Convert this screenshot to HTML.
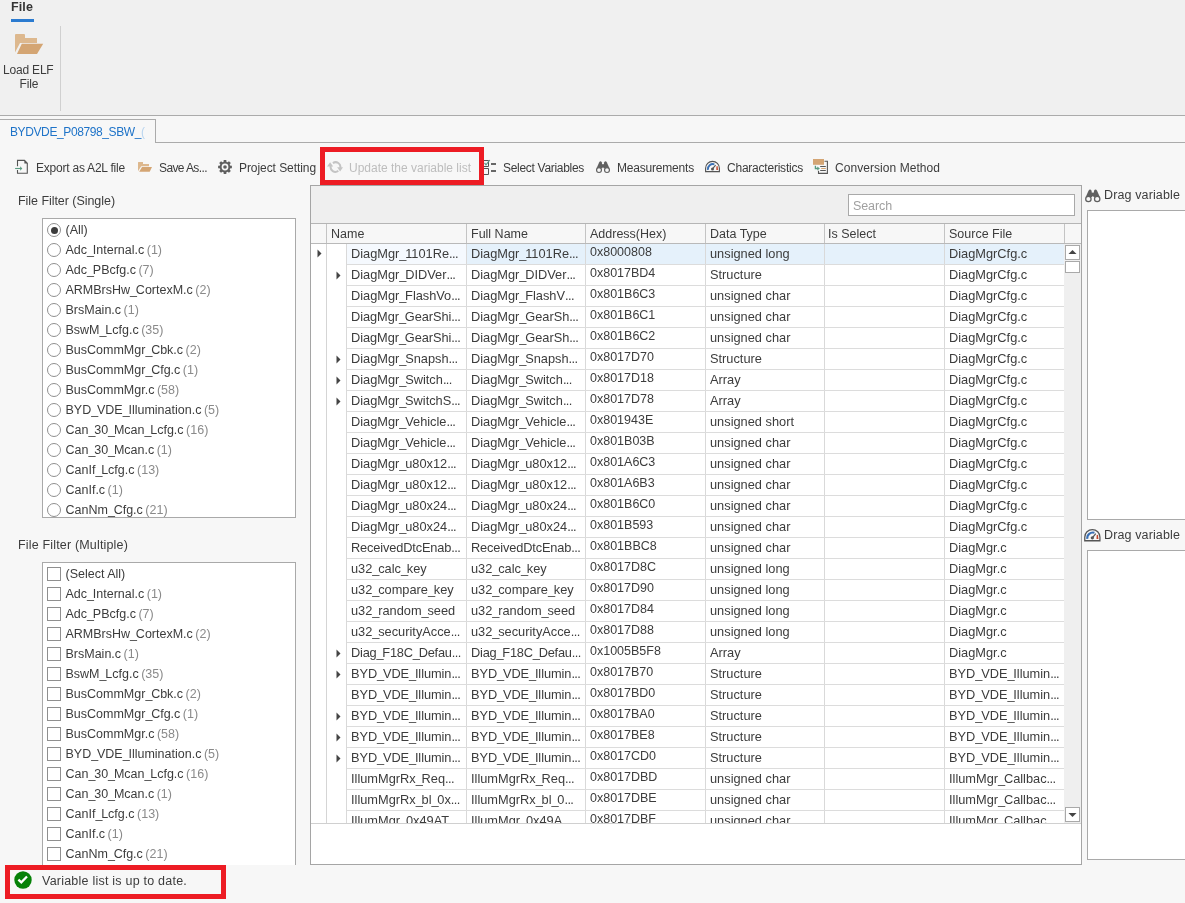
<!DOCTYPE html><html><head><meta charset="utf-8"><style>
*{margin:0;padding:0;box-sizing:border-box}
html,body{width:1185px;height:903px;overflow:hidden;background:#f7f7f7;font-family:"Liberation Sans", sans-serif;color:#3c3c3c;font-size:12.5px}
.a{position:absolute;white-space:nowrap}
.t{position:absolute;white-space:nowrap;line-height:16px}
.rad{position:absolute;width:14px;height:14px;border:1px solid #8f8f8f;border-radius:50%;background:#fff}
.chk{position:absolute;width:14px;height:14px;border:1px solid #8f8f8f;background:#fff}
</style></head><body><div style="position:absolute;left:0;top:0;width:1185px;height:903px;will-change:transform">

<div class="a" style="left:0;top:0;width:1185px;height:115px;background:#f0f0f0"></div>
<div class="a" style="left:0;top:115px;width:1185px;height:1px;background:#ababab"></div>
<div class="t" style="left:11px;top:-1.13px;font-size:12.5px;color:#333;font-weight:bold;letter-spacing:0.117px;">File</div>
<div class="a" style="left:11px;top:19px;width:23px;height:3px;background:#2b7bd0"></div>
<div class="a" style="left:60px;top:26px;width:1px;height:85px;background:#d0d0d0"></div>
<svg class="a" style="left:15px;top:34px" width="29" height="21" viewBox="0 0 29 21">
<path d="M0 1 Q0 0 1 0 H9.5 L10 1 V4 H22 V9 H5 L0 18.6 Z" fill="#ddb88e"/>
<path d="M6.8 9.7 H28.2 L22 20 H2 Z" fill="#d4a573"/></svg>
<div class="t" style="left:3px;top:61.63px;font-size:12px;letter-spacing:-0.192px;">Load ELF</div>
<div class="t" style="left:19.5px;top:75.53px;font-size:12px;letter-spacing:-0.159px;">File</div>
<div class="a" style="left:0;top:142px;width:1185px;height:1px;background:#ababab"></div>
<div class="a" style="left:-1px;top:119px;width:157px;height:24px;border:1px solid #ababab;border-bottom:none;background:#f7f7f7"></div>
<div class="t" style="left:10px;top:124.03px;font-size:12px;color:#1e73c8;letter-spacing:-0.393px;">BYDVDE_P08798_SBW_</div>
<div class="t" style="left:141px;top:123.5px;font-size:12px;color:#b9d5ef;width:4px;overflow:hidden">(</div>
<svg class="a" style="left:14px;top:159px" width="16" height="16" viewBox="0 0 16 16">
<path d="M3.5 7.3 V1.4 H10.5 L13.3 4.3 V14.3 H3.5 V11.1" fill="none" stroke="#555" stroke-width="1.1"/>
<path d="M10.4 1.2 V4.6 H13.6 Z" fill="#555"/>
<path d="M1.1 9.5 H7.2" stroke="#5a9a80" stroke-width="1.1"/>
<path d="M6.2 7.2 L8.3 9.5 L6.2 11.8 Z" fill="#5a9a80"/></svg>
<div class="t" style="left:36px;top:160.03px;font-size:12px;color:#3c3c3c;letter-spacing:-0.225px;">Export as A2L file</div>
<svg class="a" style="left:138px;top:162px" width="15" height="12" viewBox="0 0 15 12">
<path d="M0 0.5 Q0 0 0.5 0 H5 V2 H11 V4.2 H3.2 L0 9.3 Z" fill="#ddb88e"/>
<path d="M4 5 H14 L11.7 9.8 H1.2 Z" fill="#d4a573"/></svg>
<div class="t" style="left:159px;top:160.03px;font-size:12px;color:#3c3c3c;letter-spacing:-0.611px;">Save As<span style="letter-spacing:-0.6px">...</span></div>
<svg class="a" style="left:218px;top:160px" width="14" height="14" viewBox="-7 -7 14 14">
<g fill="#5f5f5f"><circle r="5.3"/>
<path id="tooth" d="M-1.3 -6.9 H1.3 L1.6 -4 H-1.6 Z"/>
<use href="#tooth" transform="rotate(45)"/><use href="#tooth" transform="rotate(90)"/><use href="#tooth" transform="rotate(135)"/>
<use href="#tooth" transform="rotate(180)"/><use href="#tooth" transform="rotate(225)"/><use href="#tooth" transform="rotate(270)"/><use href="#tooth" transform="rotate(315)"/></g>
<circle r="3.4" fill="#f7f7f7"/><circle r="1.8" fill="#5f5f5f"/></svg>
<div class="t" style="left:239px;top:160.03px;font-size:12px;color:#3c3c3c;letter-spacing:-0.069px;">Project Setting</div>
<svg class="a" style="left:326px;top:160px" width="18" height="14" viewBox="0 0 18 14">
<path d="M12.3 10.8 A4.7 4.7 0 0 1 4.8 5.9" fill="none" stroke="#c4c4c4" stroke-width="2"/>
<path d="M1 6.6 H7.2 L4.1 2.2 Z" fill="#c4c4c4"/>
<path d="M6.9 3.1 A4.7 4.7 0 0 1 14.2 8.1" fill="none" stroke="#c4c4c4" stroke-width="2"/>
<path d="M11.2 7.2 H17 L14.1 11.6 Z" fill="#c4c4c4"/></svg>
<div class="t" style="left:349px;top:160.03px;font-size:12px;color:#bdbdbd;letter-spacing:-0.003px;">Update the variable list</div>
<svg class="a" style="left:482px;top:159px" width="15" height="17" viewBox="0 0 15 17">
<path d="M1.5 1.5 H6.5 V7.5 H1.5 Z M1.5 9.5 H6.5 V15.5 H1.5 Z" fill="none" stroke="#555"/>
<path d="M2.5 4 L4 5.8 L7.8 1" fill="none" stroke="#5a9a88" stroke-width="1.2"/>
<rect x="9" y="4.2" width="5" height="1.6" fill="#444"/><rect x="9" y="11.2" width="5" height="1.6" fill="#444"/></svg>
<div class="t" style="left:503px;top:160.03px;font-size:12px;color:#3c3c3c;letter-spacing:-0.301px;">Select Variables</div>
<svg class="a" style="left:595px;top:160px" width="16" height="14" viewBox="0 0 16 14">
<g fill="#606060"><path d="M4.1 2.6 Q5.5 0.1 6.9 2.6 L7.4 8.2 H1.6 Z"/><path d="M9.1 2.6 Q10.5 0.1 11.9 2.6 L14.4 8.2 H8.6 Z"/>
<rect x="6.5" y="4.2" width="3" height="3.4"/></g>
<circle cx="4" cy="10" r="2.45" fill="#f7f7f7" stroke="#606060" stroke-width="1.15"/><circle cx="12" cy="10" r="2.45" fill="#f7f7f7" stroke="#606060" stroke-width="1.15"/></svg>
<div class="t" style="left:617px;top:160.03px;font-size:12px;color:#3c3c3c;letter-spacing:-0.197px;">Measurements</div>
<svg class="a" style="left:704px;top:160px" width="17" height="13" viewBox="0 0 17 13">
<path d="M1.6 11.6 V8.3 A6.9 6.9 0 0 1 15.4 8.3 V11.6 Z" fill="none" stroke="#555" stroke-width="1.15"/>
<path d="M3.9 9.8 A5.1 5.1 0 0 1 10.4 4.3" fill="none" stroke="#3a70b5" stroke-width="1.9"/>
<path d="M12.4 6.6 L13.6 6.1 L14 10 H12.3 Z" fill="#c9462c"/>
<path d="M8.5 8.9 L11.6 5.2" stroke="#555" stroke-width="1.1"/><circle cx="8.5" cy="8.9" r="1.5" fill="#555"/></svg>
<div class="t" style="left:727px;top:160.03px;font-size:12px;color:#3c3c3c;letter-spacing:-0.224px;">Characteristics</div>
<svg class="a" style="left:812px;top:158px" width="17" height="17" viewBox="0 0 17 17">
<rect x="1" y="1" width="11" height="5.8" fill="#d4a574"/>
<path d="M12.5 3.3 H15.4 V15.4 H6.5 V12.8" fill="none" stroke="#555" stroke-width="1.1"/>
<path d="M8.2 8.5 H13.8 M8.2 12.5 H13.8" stroke="#555" stroke-width="1"/>
<path d="M9.2 10.5 H13.8" stroke="#d4a574" stroke-width="1"/>
<path d="M3.4 7.8 V10.5 H6" fill="none" stroke="#5a9a80" stroke-width="1.3"/>
<path d="M5.3 8.6 L7.9 10.5 L5.3 12.4 Z" fill="#5a9a80"/></svg>
<div class="t" style="left:835px;top:160.03px;font-size:12px;color:#3c3c3c;letter-spacing:0.055px;">Conversion Method</div>
<div class="a" style="left:320px;top:147px;width:164px;height:38px;border:5px solid #ed1c24"></div>
<div class="t" style="left:18px;top:192.87px;font-size:12.5px;letter-spacing:-0.047px;">File Filter (Single)</div>
<div class="a" style="left:42px;top:218px;width:254px;height:300px;border:1px solid #a9a9a9;background:#fff;overflow:hidden">
<div class="rad" style="left:4px;top:4px"></div>
<div class="a" style="left:7.5px;top:7.5px;width:7px;height:7px;border-radius:50%;background:#3c3c3c"></div>
<div class="rad" style="left:4px;top:24px"></div>
<div class="rad" style="left:4px;top:44px"></div>
<div class="rad" style="left:4px;top:64px"></div>
<div class="rad" style="left:4px;top:84px"></div>
<div class="rad" style="left:4px;top:104px"></div>
<div class="rad" style="left:4px;top:124px"></div>
<div class="rad" style="left:4px;top:144px"></div>
<div class="rad" style="left:4px;top:164px"></div>
<div class="rad" style="left:4px;top:184px"></div>
<div class="rad" style="left:4px;top:204px"></div>
<div class="rad" style="left:4px;top:224px"></div>
<div class="rad" style="left:4px;top:244px"></div>
<div class="rad" style="left:4px;top:264px"></div>
<div class="rad" style="left:4px;top:284px"></div>
</div>
<div class="a" style="left:43px;top:219px;width:252px;height:298px;overflow:hidden">
<div class="t" style="left:22.5px;top:2.87px;font-size:12.5px;">(All)</div>
<div class="t" style="left:22.5px;top:22.87px;font-size:12.5px;">Adc<span style="letter-spacing:-1.2px">_</span>Internal.c<span style="color:#8a8a8a;margin-left:2.5px">(1)</span></div>
<div class="t" style="left:22.5px;top:42.87px;font-size:12.5px;">Adc<span style="letter-spacing:-1.2px">_</span>PBcfg.c<span style="color:#8a8a8a;margin-left:2.5px">(7)</span></div>
<div class="t" style="left:22.5px;top:62.87px;font-size:12.5px;">ARMBrsHw<span style="letter-spacing:-1.2px">_</span>CortexM.c<span style="color:#8a8a8a;margin-left:2.5px">(2)</span></div>
<div class="t" style="left:22.5px;top:82.87px;font-size:12.5px;">BrsMain.c<span style="color:#8a8a8a;margin-left:2.5px">(1)</span></div>
<div class="t" style="left:22.5px;top:102.87px;font-size:12.5px;">BswM<span style="letter-spacing:-1.2px">_</span>Lcfg.c<span style="color:#8a8a8a;margin-left:2.5px">(35)</span></div>
<div class="t" style="left:22.5px;top:122.87px;font-size:12.5px;">BusCommMgr<span style="letter-spacing:-1.2px">_</span>Cbk.c<span style="color:#8a8a8a;margin-left:2.5px">(2)</span></div>
<div class="t" style="left:22.5px;top:142.87px;font-size:12.5px;">BusCommMgr<span style="letter-spacing:-1.2px">_</span>Cfg.c<span style="color:#8a8a8a;margin-left:2.5px">(1)</span></div>
<div class="t" style="left:22.5px;top:162.87px;font-size:12.5px;">BusCommMgr.c<span style="color:#8a8a8a;margin-left:2.5px">(58)</span></div>
<div class="t" style="left:22.5px;top:182.87px;font-size:12.5px;">BYD<span style="letter-spacing:-1.2px">_</span>VDE<span style="letter-spacing:-1.2px">_</span>Illumination.c<span style="color:#8a8a8a;margin-left:2.5px">(5)</span></div>
<div class="t" style="left:22.5px;top:202.87px;font-size:12.5px;">Can<span style="letter-spacing:-1.2px">_</span>30<span style="letter-spacing:-1.2px">_</span>Mcan<span style="letter-spacing:-1.2px">_</span>Lcfg.c<span style="color:#8a8a8a;margin-left:2.5px">(16)</span></div>
<div class="t" style="left:22.5px;top:222.87px;font-size:12.5px;">Can<span style="letter-spacing:-1.2px">_</span>30<span style="letter-spacing:-1.2px">_</span>Mcan.c<span style="color:#8a8a8a;margin-left:2.5px">(1)</span></div>
<div class="t" style="left:22.5px;top:242.87px;font-size:12.5px;">CanIf<span style="letter-spacing:-1.2px">_</span>Lcfg.c<span style="color:#8a8a8a;margin-left:2.5px">(13)</span></div>
<div class="t" style="left:22.5px;top:262.87px;font-size:12.5px;">CanIf.c<span style="color:#8a8a8a;margin-left:2.5px">(1)</span></div>
<div class="t" style="left:22.5px;top:282.87px;font-size:12.5px;">CanNm<span style="letter-spacing:-1.2px">_</span>Cfg.c<span style="color:#8a8a8a;margin-left:2.5px">(21)</span></div>
</div>
<div class="t" style="left:18px;top:536.87px;font-size:12.5px;letter-spacing:0.170px;">File Filter (Multiple)</div>
<div class="a" style="left:42px;top:562px;width:254px;height:310px;border:1px solid #a9a9a9;background:#fff;overflow:hidden"></div>
<div class="a" style="left:43px;top:563px;width:252px;height:308px;overflow:hidden">
<div class="chk" style="left:4px;top:4px"></div>
<div class="t" style="left:22.5px;top:2.87px;font-size:12.5px;">(Select All)</div>
<div class="chk" style="left:4px;top:24px"></div>
<div class="t" style="left:22.5px;top:22.87px;font-size:12.5px;">Adc<span style="letter-spacing:-1.2px">_</span>Internal.c<span style="color:#8a8a8a;margin-left:2.5px">(1)</span></div>
<div class="chk" style="left:4px;top:44px"></div>
<div class="t" style="left:22.5px;top:42.87px;font-size:12.5px;">Adc<span style="letter-spacing:-1.2px">_</span>PBcfg.c<span style="color:#8a8a8a;margin-left:2.5px">(7)</span></div>
<div class="chk" style="left:4px;top:64px"></div>
<div class="t" style="left:22.5px;top:62.87px;font-size:12.5px;">ARMBrsHw<span style="letter-spacing:-1.2px">_</span>CortexM.c<span style="color:#8a8a8a;margin-left:2.5px">(2)</span></div>
<div class="chk" style="left:4px;top:84px"></div>
<div class="t" style="left:22.5px;top:82.87px;font-size:12.5px;">BrsMain.c<span style="color:#8a8a8a;margin-left:2.5px">(1)</span></div>
<div class="chk" style="left:4px;top:104px"></div>
<div class="t" style="left:22.5px;top:102.87px;font-size:12.5px;">BswM<span style="letter-spacing:-1.2px">_</span>Lcfg.c<span style="color:#8a8a8a;margin-left:2.5px">(35)</span></div>
<div class="chk" style="left:4px;top:124px"></div>
<div class="t" style="left:22.5px;top:122.87px;font-size:12.5px;">BusCommMgr<span style="letter-spacing:-1.2px">_</span>Cbk.c<span style="color:#8a8a8a;margin-left:2.5px">(2)</span></div>
<div class="chk" style="left:4px;top:144px"></div>
<div class="t" style="left:22.5px;top:142.87px;font-size:12.5px;">BusCommMgr<span style="letter-spacing:-1.2px">_</span>Cfg.c<span style="color:#8a8a8a;margin-left:2.5px">(1)</span></div>
<div class="chk" style="left:4px;top:164px"></div>
<div class="t" style="left:22.5px;top:162.87px;font-size:12.5px;">BusCommMgr.c<span style="color:#8a8a8a;margin-left:2.5px">(58)</span></div>
<div class="chk" style="left:4px;top:184px"></div>
<div class="t" style="left:22.5px;top:182.87px;font-size:12.5px;">BYD<span style="letter-spacing:-1.2px">_</span>VDE<span style="letter-spacing:-1.2px">_</span>Illumination.c<span style="color:#8a8a8a;margin-left:2.5px">(5)</span></div>
<div class="chk" style="left:4px;top:204px"></div>
<div class="t" style="left:22.5px;top:202.87px;font-size:12.5px;">Can<span style="letter-spacing:-1.2px">_</span>30<span style="letter-spacing:-1.2px">_</span>Mcan<span style="letter-spacing:-1.2px">_</span>Lcfg.c<span style="color:#8a8a8a;margin-left:2.5px">(16)</span></div>
<div class="chk" style="left:4px;top:224px"></div>
<div class="t" style="left:22.5px;top:222.87px;font-size:12.5px;">Can<span style="letter-spacing:-1.2px">_</span>30<span style="letter-spacing:-1.2px">_</span>Mcan.c<span style="color:#8a8a8a;margin-left:2.5px">(1)</span></div>
<div class="chk" style="left:4px;top:244px"></div>
<div class="t" style="left:22.5px;top:242.87px;font-size:12.5px;">CanIf<span style="letter-spacing:-1.2px">_</span>Lcfg.c<span style="color:#8a8a8a;margin-left:2.5px">(13)</span></div>
<div class="chk" style="left:4px;top:264px"></div>
<div class="t" style="left:22.5px;top:262.87px;font-size:12.5px;">CanIf.c<span style="color:#8a8a8a;margin-left:2.5px">(1)</span></div>
<div class="chk" style="left:4px;top:284px"></div>
<div class="t" style="left:22.5px;top:282.87px;font-size:12.5px;">CanNm<span style="letter-spacing:-1.2px">_</span>Cfg.c<span style="color:#8a8a8a;margin-left:2.5px">(21)</span></div>
</div>
<div class="a" style="left:0px;top:865px;width:305px;height:38px;background:#f7f7f7"></div>
<div class="a" style="left:5px;top:865px;width:221px;height:34px;border:5px solid #ed1c24;background:#f7f7f7"></div>
<svg class="a" style="left:14px;top:871px" width="18" height="18" viewBox="0 0 18 18">
<circle cx="9" cy="9" r="8.7" fill="#068208"/>
<path d="M4.4 8.6 L7.3 11.3 L13 5.5" fill="none" stroke="#fff" stroke-width="2.3"/></svg>
<div class="t" style="left:42px;top:873.37px;font-size:12.5px;letter-spacing:0.224px;">Variable list is up to date.</div>
<div class="a" style="left:310px;top:185px;width:772px;height:680px;border:1px solid #a5a5a5;background:#fff"></div>
<div class="a" style="left:311px;top:186px;width:770px;height:37px;background:#efefef"></div>
<div class="a" style="left:311px;top:223px;width:770px;height:1px;background:#b5b5b5"></div>
<div class="a" style="left:848px;top:194px;width:227px;height:22px;border:1px solid #a9a9a9;background:#fff"></div>
<div class="t" style="left:853px;top:197.87px;font-size:12.5px;color:#a0a0a0;letter-spacing:-0.101px;">Search</div>
<div class="a" style="left:311px;top:224px;width:770px;height:19px;background:#f7f7f7"></div>
<div class="a" style="left:311px;top:243px;width:770px;height:1px;background:#b9b9b9"></div>
<div class="a" style="left:326px;top:224px;width:1px;height:19px;background:#c4c4c4"></div>
<div class="a" style="left:466px;top:224px;width:1px;height:19px;background:#c4c4c4"></div>
<div class="a" style="left:585px;top:224px;width:1px;height:19px;background:#c4c4c4"></div>
<div class="a" style="left:705px;top:224px;width:1px;height:19px;background:#c4c4c4"></div>
<div class="a" style="left:824px;top:224px;width:1px;height:19px;background:#c4c4c4"></div>
<div class="a" style="left:944px;top:224px;width:1px;height:19px;background:#c4c4c4"></div>
<div class="a" style="left:1064px;top:224px;width:1px;height:19px;background:#c4c4c4"></div>
<div class="t" style="left:331px;top:225.87px;font-size:12.5px;">Name</div>
<div class="t" style="left:471px;top:225.87px;font-size:12.5px;">Full Name</div>
<div class="t" style="left:590px;top:225.87px;font-size:12.5px;">Address(Hex)</div>
<div class="t" style="left:710px;top:225.87px;font-size:12.5px;">Data Type</div>
<div class="t" style="left:828px;top:225.87px;font-size:12.5px;">Is Select</div>
<div class="t" style="left:949px;top:225.87px;font-size:12.5px;">Source File</div>
<div class="a" style="left:347px;top:244px;width:119px;height:20px;background:#f5f9fe"></div>
<div class="a" style="left:467px;top:244px;width:597px;height:20px;background:#e5f1fb"></div>
<div class="a" style="left:326px;top:244px;width:1px;height:579px;background:#d5d5d5"></div>
<div class="a" style="left:346px;top:244px;width:1px;height:579px;background:#d9d9d9"></div>
<div class="a" style="left:466px;top:244px;width:1px;height:579px;background:#d9d9d9"></div>
<div class="a" style="left:585px;top:244px;width:1px;height:579px;background:#d9d9d9"></div>
<div class="a" style="left:705px;top:244px;width:1px;height:579px;background:#d9d9d9"></div>
<div class="a" style="left:824px;top:244px;width:1px;height:579px;background:#d9d9d9"></div>
<div class="a" style="left:944px;top:244px;width:1px;height:579px;background:#d9d9d9"></div>
<div class="a" style="left:347px;top:264px;width:717px;height:1px;background:#dcdcdc"></div>
<div class="a" style="left:347px;top:285px;width:717px;height:1px;background:#dcdcdc"></div>
<div class="a" style="left:347px;top:306px;width:717px;height:1px;background:#dcdcdc"></div>
<div class="a" style="left:347px;top:327px;width:717px;height:1px;background:#dcdcdc"></div>
<div class="a" style="left:347px;top:348px;width:717px;height:1px;background:#dcdcdc"></div>
<div class="a" style="left:347px;top:369px;width:717px;height:1px;background:#dcdcdc"></div>
<div class="a" style="left:347px;top:390px;width:717px;height:1px;background:#dcdcdc"></div>
<div class="a" style="left:347px;top:411px;width:717px;height:1px;background:#dcdcdc"></div>
<div class="a" style="left:347px;top:432px;width:717px;height:1px;background:#dcdcdc"></div>
<div class="a" style="left:347px;top:453px;width:717px;height:1px;background:#dcdcdc"></div>
<div class="a" style="left:347px;top:474px;width:717px;height:1px;background:#dcdcdc"></div>
<div class="a" style="left:347px;top:495px;width:717px;height:1px;background:#dcdcdc"></div>
<div class="a" style="left:347px;top:516px;width:717px;height:1px;background:#dcdcdc"></div>
<div class="a" style="left:347px;top:537px;width:717px;height:1px;background:#dcdcdc"></div>
<div class="a" style="left:347px;top:558px;width:717px;height:1px;background:#dcdcdc"></div>
<div class="a" style="left:347px;top:579px;width:717px;height:1px;background:#dcdcdc"></div>
<div class="a" style="left:347px;top:600px;width:717px;height:1px;background:#dcdcdc"></div>
<div class="a" style="left:347px;top:621px;width:717px;height:1px;background:#dcdcdc"></div>
<div class="a" style="left:347px;top:642px;width:717px;height:1px;background:#dcdcdc"></div>
<div class="a" style="left:347px;top:663px;width:717px;height:1px;background:#dcdcdc"></div>
<div class="a" style="left:347px;top:684px;width:717px;height:1px;background:#dcdcdc"></div>
<div class="a" style="left:347px;top:705px;width:717px;height:1px;background:#dcdcdc"></div>
<div class="a" style="left:347px;top:726px;width:717px;height:1px;background:#dcdcdc"></div>
<div class="a" style="left:347px;top:747px;width:717px;height:1px;background:#dcdcdc"></div>
<div class="a" style="left:347px;top:768px;width:717px;height:1px;background:#dcdcdc"></div>
<div class="a" style="left:347px;top:789px;width:717px;height:1px;background:#dcdcdc"></div>
<div class="a" style="left:347px;top:810px;width:717px;height:1px;background:#dcdcdc"></div>
<div class="a" style="left:311px;top:823px;width:770px;height:1px;background:#d0d0d0"></div>
<div class="a" style="left:311px;top:244px;width:753px;height:579px;overflow:hidden">
<div class="t" style="left:40px;top:1.77px;font-size:12.8px;">DiagMgr<span style="letter-spacing:-1.3px">_</span>1101Re<span style="letter-spacing:-0.6px">...</span></div>
<div class="t" style="left:160px;top:1.77px;font-size:12.8px;">DiagMgr<span style="letter-spacing:-1.3px">_</span>1101Re<span style="letter-spacing:-0.6px">...</span></div>
<div class="t" style="left:279px;top:0.37px;font-size:12.5px;">0x8000808</div>
<div class="t" style="left:399px;top:1.77px;font-size:12.8px;">unsigned long</div>
<div class="t" style="left:638px;top:1.77px;font-size:12.8px;">DiagMgrCfg.c</div>
<div class="t" style="left:40px;top:22.77px;font-size:12.8px;">DiagMgr<span style="letter-spacing:-1.3px">_</span>DIDVer<span style="letter-spacing:-0.6px">...</span></div>
<div class="t" style="left:160px;top:22.77px;font-size:12.8px;">DiagMgr<span style="letter-spacing:-1.3px">_</span>DIDVer<span style="letter-spacing:-0.6px">...</span></div>
<div class="t" style="left:279px;top:21.37px;font-size:12.5px;">0x8017BD4</div>
<div class="t" style="left:399px;top:22.77px;font-size:12.8px;">Structure</div>
<div class="t" style="left:638px;top:22.77px;font-size:12.8px;">DiagMgrCfg.c</div>
<svg class="a" style="left:25px;top:27px" width="5" height="9" viewBox="0 0 5 9"><path d="M0.5 0.5 L4.5 4.5 L0.5 8.5 Z" fill="#444"/></svg>
<div class="t" style="left:40px;top:43.77px;font-size:12.8px;letter-spacing:-0.017px;">DiagMgr<span style="letter-spacing:-1.3px">_</span>FlashVo<span style="letter-spacing:-0.6px">...</span></div>
<div class="t" style="left:160px;top:43.77px;font-size:12.8px;">DiagMgr<span style="letter-spacing:-1.3px">_</span>FlashV<span style="letter-spacing:-0.6px">...</span></div>
<div class="t" style="left:279px;top:42.37px;font-size:12.5px;">0x801B6C3</div>
<div class="t" style="left:399px;top:43.77px;font-size:12.8px;">unsigned char</div>
<div class="t" style="left:638px;top:43.77px;font-size:12.8px;">DiagMgrCfg.c</div>
<div class="t" style="left:40px;top:64.77px;font-size:12.8px;letter-spacing:-0.062px;">DiagMgr<span style="letter-spacing:-1.3px">_</span>GearShi<span style="letter-spacing:-0.6px">...</span></div>
<div class="t" style="left:160px;top:64.77px;font-size:12.8px;">DiagMgr<span style="letter-spacing:-1.3px">_</span>GearSh<span style="letter-spacing:-0.6px">...</span></div>
<div class="t" style="left:279px;top:63.37px;font-size:12.5px;">0x801B6C1</div>
<div class="t" style="left:399px;top:64.77px;font-size:12.8px;">unsigned char</div>
<div class="t" style="left:638px;top:64.77px;font-size:12.8px;">DiagMgrCfg.c</div>
<div class="t" style="left:40px;top:85.77px;font-size:12.8px;letter-spacing:-0.062px;">DiagMgr<span style="letter-spacing:-1.3px">_</span>GearShi<span style="letter-spacing:-0.6px">...</span></div>
<div class="t" style="left:160px;top:85.77px;font-size:12.8px;">DiagMgr<span style="letter-spacing:-1.3px">_</span>GearSh<span style="letter-spacing:-0.6px">...</span></div>
<div class="t" style="left:279px;top:84.37px;font-size:12.5px;">0x801B6C2</div>
<div class="t" style="left:399px;top:85.77px;font-size:12.8px;">unsigned char</div>
<div class="t" style="left:638px;top:85.77px;font-size:12.8px;">DiagMgrCfg.c</div>
<div class="t" style="left:40px;top:106.77px;font-size:12.8px;">DiagMgr<span style="letter-spacing:-1.3px">_</span>Snapsh<span style="letter-spacing:-0.6px">...</span></div>
<div class="t" style="left:160px;top:106.77px;font-size:12.8px;">DiagMgr<span style="letter-spacing:-1.3px">_</span>Snapsh<span style="letter-spacing:-0.6px">...</span></div>
<div class="t" style="left:279px;top:105.37px;font-size:12.5px;">0x8017D70</div>
<div class="t" style="left:399px;top:106.77px;font-size:12.8px;">Structure</div>
<div class="t" style="left:638px;top:106.77px;font-size:12.8px;">DiagMgrCfg.c</div>
<svg class="a" style="left:25px;top:111px" width="5" height="9" viewBox="0 0 5 9"><path d="M0.5 0.5 L4.5 4.5 L0.5 8.5 Z" fill="#444"/></svg>
<div class="t" style="left:40px;top:127.77px;font-size:12.8px;">DiagMgr<span style="letter-spacing:-1.3px">_</span>Switch<span style="letter-spacing:-0.6px">...</span></div>
<div class="t" style="left:160px;top:127.77px;font-size:12.8px;">DiagMgr<span style="letter-spacing:-1.3px">_</span>Switch<span style="letter-spacing:-0.6px">...</span></div>
<div class="t" style="left:279px;top:126.37px;font-size:12.5px;">0x8017D18</div>
<div class="t" style="left:399px;top:127.77px;font-size:12.8px;">Array</div>
<div class="t" style="left:638px;top:127.77px;font-size:12.8px;">DiagMgrCfg.c</div>
<svg class="a" style="left:25px;top:132px" width="5" height="9" viewBox="0 0 5 9"><path d="M0.5 0.5 L4.5 4.5 L0.5 8.5 Z" fill="#444"/></svg>
<div class="t" style="left:40px;top:148.77px;font-size:12.8px;letter-spacing:-0.017px;">DiagMgr<span style="letter-spacing:-1.3px">_</span>SwitchS<span style="letter-spacing:-0.6px">...</span></div>
<div class="t" style="left:160px;top:148.77px;font-size:12.8px;">DiagMgr<span style="letter-spacing:-1.3px">_</span>Switch<span style="letter-spacing:-0.6px">...</span></div>
<div class="t" style="left:279px;top:147.37px;font-size:12.5px;">0x8017D78</div>
<div class="t" style="left:399px;top:148.77px;font-size:12.8px;">Array</div>
<div class="t" style="left:638px;top:148.77px;font-size:12.8px;">DiagMgrCfg.c</div>
<svg class="a" style="left:25px;top:153px" width="5" height="9" viewBox="0 0 5 9"><path d="M0.5 0.5 L4.5 4.5 L0.5 8.5 Z" fill="#444"/></svg>
<div class="t" style="left:40px;top:169.77px;font-size:12.8px;">DiagMgr<span style="letter-spacing:-1.3px">_</span>Vehicle<span style="letter-spacing:-0.6px">...</span></div>
<div class="t" style="left:160px;top:169.77px;font-size:12.8px;">DiagMgr<span style="letter-spacing:-1.3px">_</span>Vehicle<span style="letter-spacing:-0.6px">...</span></div>
<div class="t" style="left:279px;top:168.37px;font-size:12.5px;">0x801943E</div>
<div class="t" style="left:399px;top:169.77px;font-size:12.8px;">unsigned short</div>
<div class="t" style="left:638px;top:169.77px;font-size:12.8px;">DiagMgrCfg.c</div>
<div class="t" style="left:40px;top:190.77px;font-size:12.8px;">DiagMgr<span style="letter-spacing:-1.3px">_</span>Vehicle<span style="letter-spacing:-0.6px">...</span></div>
<div class="t" style="left:160px;top:190.77px;font-size:12.8px;">DiagMgr<span style="letter-spacing:-1.3px">_</span>Vehicle<span style="letter-spacing:-0.6px">...</span></div>
<div class="t" style="left:279px;top:189.37px;font-size:12.5px;">0x801B03B</div>
<div class="t" style="left:399px;top:190.77px;font-size:12.8px;">unsigned char</div>
<div class="t" style="left:638px;top:190.77px;font-size:12.8px;">DiagMgrCfg.c</div>
<div class="t" style="left:40px;top:211.77px;font-size:12.8px;">DiagMgr<span style="letter-spacing:-1.3px">_</span>u80x12<span style="letter-spacing:-0.6px">...</span></div>
<div class="t" style="left:160px;top:211.77px;font-size:12.8px;">DiagMgr<span style="letter-spacing:-1.3px">_</span>u80x12<span style="letter-spacing:-0.6px">...</span></div>
<div class="t" style="left:279px;top:210.37px;font-size:12.5px;">0x801A6C3</div>
<div class="t" style="left:399px;top:211.77px;font-size:12.8px;">unsigned char</div>
<div class="t" style="left:638px;top:211.77px;font-size:12.8px;">DiagMgrCfg.c</div>
<div class="t" style="left:40px;top:232.77px;font-size:12.8px;">DiagMgr<span style="letter-spacing:-1.3px">_</span>u80x12<span style="letter-spacing:-0.6px">...</span></div>
<div class="t" style="left:160px;top:232.77px;font-size:12.8px;">DiagMgr<span style="letter-spacing:-1.3px">_</span>u80x12<span style="letter-spacing:-0.6px">...</span></div>
<div class="t" style="left:279px;top:231.37px;font-size:12.5px;">0x801A6B3</div>
<div class="t" style="left:399px;top:232.77px;font-size:12.8px;">unsigned char</div>
<div class="t" style="left:638px;top:232.77px;font-size:12.8px;">DiagMgrCfg.c</div>
<div class="t" style="left:40px;top:253.77px;font-size:12.8px;">DiagMgr<span style="letter-spacing:-1.3px">_</span>u80x24<span style="letter-spacing:-0.6px">...</span></div>
<div class="t" style="left:160px;top:253.77px;font-size:12.8px;">DiagMgr<span style="letter-spacing:-1.3px">_</span>u80x24<span style="letter-spacing:-0.6px">...</span></div>
<div class="t" style="left:279px;top:252.37px;font-size:12.5px;">0x801B6C0</div>
<div class="t" style="left:399px;top:253.77px;font-size:12.8px;">unsigned char</div>
<div class="t" style="left:638px;top:253.77px;font-size:12.8px;">DiagMgrCfg.c</div>
<div class="t" style="left:40px;top:274.77px;font-size:12.8px;">DiagMgr<span style="letter-spacing:-1.3px">_</span>u80x24<span style="letter-spacing:-0.6px">...</span></div>
<div class="t" style="left:160px;top:274.77px;font-size:12.8px;">DiagMgr<span style="letter-spacing:-1.3px">_</span>u80x24<span style="letter-spacing:-0.6px">...</span></div>
<div class="t" style="left:279px;top:273.37px;font-size:12.5px;">0x801B593</div>
<div class="t" style="left:399px;top:274.77px;font-size:12.8px;">unsigned char</div>
<div class="t" style="left:638px;top:274.77px;font-size:12.8px;">DiagMgrCfg.c</div>
<div class="t" style="left:40px;top:295.77px;font-size:12.8px;letter-spacing:-0.144px;">ReceivedDtcEnab<span style="letter-spacing:-0.6px">...</span></div>
<div class="t" style="left:160px;top:295.77px;font-size:12.8px;letter-spacing:-0.144px;">ReceivedDtcEnab<span style="letter-spacing:-0.6px">...</span></div>
<div class="t" style="left:279px;top:294.37px;font-size:12.5px;">0x801BBC8</div>
<div class="t" style="left:399px;top:295.77px;font-size:12.8px;">unsigned char</div>
<div class="t" style="left:638px;top:295.77px;font-size:12.8px;">DiagMgr.c</div>
<div class="t" style="left:40px;top:316.77px;font-size:12.8px;">u32<span style="letter-spacing:-1.3px">_</span>calc<span style="letter-spacing:-1.3px">_</span>key</div>
<div class="t" style="left:160px;top:316.77px;font-size:12.8px;">u32<span style="letter-spacing:-1.3px">_</span>calc<span style="letter-spacing:-1.3px">_</span>key</div>
<div class="t" style="left:279px;top:315.37px;font-size:12.5px;">0x8017D8C</div>
<div class="t" style="left:399px;top:316.77px;font-size:12.8px;">unsigned long</div>
<div class="t" style="left:638px;top:316.77px;font-size:12.8px;">DiagMgr.c</div>
<div class="t" style="left:40px;top:337.77px;font-size:12.8px;">u32<span style="letter-spacing:-1.3px">_</span>compare<span style="letter-spacing:-1.3px">_</span>key</div>
<div class="t" style="left:160px;top:337.77px;font-size:12.8px;">u32<span style="letter-spacing:-1.3px">_</span>compare<span style="letter-spacing:-1.3px">_</span>key</div>
<div class="t" style="left:279px;top:336.37px;font-size:12.5px;">0x8017D90</div>
<div class="t" style="left:399px;top:337.77px;font-size:12.8px;">unsigned long</div>
<div class="t" style="left:638px;top:337.77px;font-size:12.8px;">DiagMgr.c</div>
<div class="t" style="left:40px;top:358.77px;font-size:12.8px;">u32<span style="letter-spacing:-1.3px">_</span>random<span style="letter-spacing:-1.3px">_</span>seed</div>
<div class="t" style="left:160px;top:358.77px;font-size:12.8px;">u32<span style="letter-spacing:-1.3px">_</span>random<span style="letter-spacing:-1.3px">_</span>seed</div>
<div class="t" style="left:279px;top:357.37px;font-size:12.5px;">0x8017D84</div>
<div class="t" style="left:399px;top:358.77px;font-size:12.8px;">unsigned long</div>
<div class="t" style="left:638px;top:358.77px;font-size:12.8px;">DiagMgr.c</div>
<div class="t" style="left:40px;top:379.77px;font-size:12.8px;">u32<span style="letter-spacing:-1.3px">_</span>securityAcce<span style="letter-spacing:-0.6px">...</span></div>
<div class="t" style="left:160px;top:379.77px;font-size:12.8px;">u32<span style="letter-spacing:-1.3px">_</span>securityAcce<span style="letter-spacing:-0.6px">...</span></div>
<div class="t" style="left:279px;top:378.37px;font-size:12.5px;">0x8017D88</div>
<div class="t" style="left:399px;top:379.77px;font-size:12.8px;">unsigned long</div>
<div class="t" style="left:638px;top:379.77px;font-size:12.8px;">DiagMgr.c</div>
<div class="t" style="left:40px;top:400.77px;font-size:12.8px;letter-spacing:-0.204px;">Diag<span style="letter-spacing:-1.3px">_</span>F18C<span style="letter-spacing:-1.3px">_</span>Defau<span style="letter-spacing:-0.6px">...</span></div>
<div class="t" style="left:160px;top:400.77px;font-size:12.8px;letter-spacing:-0.204px;">Diag<span style="letter-spacing:-1.3px">_</span>F18C<span style="letter-spacing:-1.3px">_</span>Defau<span style="letter-spacing:-0.6px">...</span></div>
<div class="t" style="left:279px;top:399.37px;font-size:12.5px;">0x1005B5F8</div>
<div class="t" style="left:399px;top:400.77px;font-size:12.8px;">Array</div>
<div class="t" style="left:638px;top:400.77px;font-size:12.8px;">DiagMgr.c</div>
<svg class="a" style="left:25px;top:405px" width="5" height="9" viewBox="0 0 5 9"><path d="M0.5 0.5 L4.5 4.5 L0.5 8.5 Z" fill="#444"/></svg>
<div class="t" style="left:40px;top:421.77px;font-size:12.8px;letter-spacing:-0.069px;">BYD<span style="letter-spacing:-1.3px">_</span>VDE<span style="letter-spacing:-1.3px">_</span>Illumin<span style="letter-spacing:-0.6px">...</span></div>
<div class="t" style="left:160px;top:421.77px;font-size:12.8px;letter-spacing:-0.069px;">BYD<span style="letter-spacing:-1.3px">_</span>VDE<span style="letter-spacing:-1.3px">_</span>Illumin<span style="letter-spacing:-0.6px">...</span></div>
<div class="t" style="left:279px;top:420.37px;font-size:12.5px;">0x8017B70</div>
<div class="t" style="left:399px;top:421.77px;font-size:12.8px;">Structure</div>
<div class="t" style="left:638px;top:421.77px;font-size:12.8px;letter-spacing:-0.006px;">BYD<span style="letter-spacing:-1.3px">_</span>VDE<span style="letter-spacing:-1.3px">_</span>Illumin<span style="letter-spacing:-0.6px">...</span></div>
<svg class="a" style="left:25px;top:426px" width="5" height="9" viewBox="0 0 5 9"><path d="M0.5 0.5 L4.5 4.5 L0.5 8.5 Z" fill="#444"/></svg>
<div class="t" style="left:40px;top:442.77px;font-size:12.8px;letter-spacing:-0.069px;">BYD<span style="letter-spacing:-1.3px">_</span>VDE<span style="letter-spacing:-1.3px">_</span>Illumin<span style="letter-spacing:-0.6px">...</span></div>
<div class="t" style="left:160px;top:442.77px;font-size:12.8px;letter-spacing:-0.069px;">BYD<span style="letter-spacing:-1.3px">_</span>VDE<span style="letter-spacing:-1.3px">_</span>Illumin<span style="letter-spacing:-0.6px">...</span></div>
<div class="t" style="left:279px;top:441.37px;font-size:12.5px;">0x8017BD0</div>
<div class="t" style="left:399px;top:442.77px;font-size:12.8px;">Structure</div>
<div class="t" style="left:638px;top:442.77px;font-size:12.8px;letter-spacing:-0.006px;">BYD<span style="letter-spacing:-1.3px">_</span>VDE<span style="letter-spacing:-1.3px">_</span>Illumin<span style="letter-spacing:-0.6px">...</span></div>
<div class="t" style="left:40px;top:463.77px;font-size:12.8px;letter-spacing:-0.069px;">BYD<span style="letter-spacing:-1.3px">_</span>VDE<span style="letter-spacing:-1.3px">_</span>Illumin<span style="letter-spacing:-0.6px">...</span></div>
<div class="t" style="left:160px;top:463.77px;font-size:12.8px;letter-spacing:-0.069px;">BYD<span style="letter-spacing:-1.3px">_</span>VDE<span style="letter-spacing:-1.3px">_</span>Illumin<span style="letter-spacing:-0.6px">...</span></div>
<div class="t" style="left:279px;top:462.37px;font-size:12.5px;">0x8017BA0</div>
<div class="t" style="left:399px;top:463.77px;font-size:12.8px;">Structure</div>
<div class="t" style="left:638px;top:463.77px;font-size:12.8px;letter-spacing:-0.006px;">BYD<span style="letter-spacing:-1.3px">_</span>VDE<span style="letter-spacing:-1.3px">_</span>Illumin<span style="letter-spacing:-0.6px">...</span></div>
<svg class="a" style="left:25px;top:468px" width="5" height="9" viewBox="0 0 5 9"><path d="M0.5 0.5 L4.5 4.5 L0.5 8.5 Z" fill="#444"/></svg>
<div class="t" style="left:40px;top:484.77px;font-size:12.8px;letter-spacing:-0.069px;">BYD<span style="letter-spacing:-1.3px">_</span>VDE<span style="letter-spacing:-1.3px">_</span>Illumin<span style="letter-spacing:-0.6px">...</span></div>
<div class="t" style="left:160px;top:484.77px;font-size:12.8px;letter-spacing:-0.069px;">BYD<span style="letter-spacing:-1.3px">_</span>VDE<span style="letter-spacing:-1.3px">_</span>Illumin<span style="letter-spacing:-0.6px">...</span></div>
<div class="t" style="left:279px;top:483.37px;font-size:12.5px;">0x8017BE8</div>
<div class="t" style="left:399px;top:484.77px;font-size:12.8px;">Structure</div>
<div class="t" style="left:638px;top:484.77px;font-size:12.8px;letter-spacing:-0.006px;">BYD<span style="letter-spacing:-1.3px">_</span>VDE<span style="letter-spacing:-1.3px">_</span>Illumin<span style="letter-spacing:-0.6px">...</span></div>
<svg class="a" style="left:25px;top:489px" width="5" height="9" viewBox="0 0 5 9"><path d="M0.5 0.5 L4.5 4.5 L0.5 8.5 Z" fill="#444"/></svg>
<div class="t" style="left:40px;top:505.77px;font-size:12.8px;letter-spacing:-0.069px;">BYD<span style="letter-spacing:-1.3px">_</span>VDE<span style="letter-spacing:-1.3px">_</span>Illumin<span style="letter-spacing:-0.6px">...</span></div>
<div class="t" style="left:160px;top:505.77px;font-size:12.8px;letter-spacing:-0.069px;">BYD<span style="letter-spacing:-1.3px">_</span>VDE<span style="letter-spacing:-1.3px">_</span>Illumin<span style="letter-spacing:-0.6px">...</span></div>
<div class="t" style="left:279px;top:504.37px;font-size:12.5px;">0x8017CD0</div>
<div class="t" style="left:399px;top:505.77px;font-size:12.8px;">Structure</div>
<div class="t" style="left:638px;top:505.77px;font-size:12.8px;letter-spacing:-0.006px;">BYD<span style="letter-spacing:-1.3px">_</span>VDE<span style="letter-spacing:-1.3px">_</span>Illumin<span style="letter-spacing:-0.6px">...</span></div>
<svg class="a" style="left:25px;top:510px" width="5" height="9" viewBox="0 0 5 9"><path d="M0.5 0.5 L4.5 4.5 L0.5 8.5 Z" fill="#444"/></svg>
<div class="t" style="left:40px;top:526.77px;font-size:12.8px;">IllumMgrRx<span style="letter-spacing:-1.3px">_</span>Req<span style="letter-spacing:-0.6px">...</span></div>
<div class="t" style="left:160px;top:526.77px;font-size:12.8px;">IllumMgrRx<span style="letter-spacing:-1.3px">_</span>Req<span style="letter-spacing:-0.6px">...</span></div>
<div class="t" style="left:279px;top:525.37px;font-size:12.5px;">0x8017DBD</div>
<div class="t" style="left:399px;top:526.77px;font-size:12.8px;">unsigned char</div>
<div class="t" style="left:638px;top:526.77px;font-size:12.8px;">IllumMgr<span style="letter-spacing:-1.3px">_</span>Callbac<span style="letter-spacing:-0.6px">...</span></div>
<div class="t" style="left:40px;top:547.77px;font-size:12.8px;">IllumMgrRx<span style="letter-spacing:-1.3px">_</span>bl<span style="letter-spacing:-1.3px">_</span>0x<span style="letter-spacing:-0.6px">...</span></div>
<div class="t" style="left:160px;top:547.77px;font-size:12.8px;">IllumMgrRx<span style="letter-spacing:-1.3px">_</span>bl<span style="letter-spacing:-1.3px">_</span>0<span style="letter-spacing:-0.6px">...</span></div>
<div class="t" style="left:279px;top:546.37px;font-size:12.5px;">0x8017DBE</div>
<div class="t" style="left:399px;top:547.77px;font-size:12.8px;">unsigned char</div>
<div class="t" style="left:638px;top:547.77px;font-size:12.8px;">IllumMgr<span style="letter-spacing:-1.3px">_</span>Callbac<span style="letter-spacing:-0.6px">...</span></div>
<div class="t" style="left:40px;top:568.77px;font-size:12.8px;">IllumMgr<span style="letter-spacing:-1.3px">_</span>0x49AT<span style="letter-spacing:-0.6px">...</span></div>
<div class="t" style="left:160px;top:568.77px;font-size:12.8px;">IllumMgr<span style="letter-spacing:-1.3px">_</span>0x49A<span style="letter-spacing:-0.6px">...</span></div>
<div class="t" style="left:279px;top:567.37px;font-size:12.5px;">0x8017DBF</div>
<div class="t" style="left:399px;top:568.77px;font-size:12.8px;">unsigned char</div>
<div class="t" style="left:638px;top:568.77px;font-size:12.8px;">IllumMgr<span style="letter-spacing:-1.3px">_</span>Callbac<span style="letter-spacing:-0.6px">...</span></div>
</div>
<svg class="a" style="left:317px;top:249px" width="5" height="9" viewBox="0 0 5 9"><path d="M0.5 0.5 L4.5 4.5 L0.5 8.5 Z" fill="#444"/></svg>
<div class="a" style="left:1064px;top:244px;width:17px;height:579px;background:#efefef"></div>
<div class="a" style="left:1065px;top:245px;width:15px;height:15px;border:1px solid #a9a9a9;background:#fff"></div>
<svg class="a" style="left:1068px;top:249px" width="9" height="6" viewBox="0 0 9 6"><path d="M0.5 5 L4.5 1 L8.5 5 Z" fill="#444"/></svg>
<div class="a" style="left:1065px;top:261px;width:15px;height:12px;border:1px solid #a9a9a9;background:#fff"></div>
<div class="a" style="left:1065px;top:807px;width:15px;height:15px;border:1px solid #a9a9a9;background:#fff"></div>
<svg class="a" style="left:1068px;top:812px" width="9" height="6" viewBox="0 0 9 6"><path d="M0.5 1 L4.5 5 L8.5 1 Z" fill="#444"/></svg>
<svg class="a" style="left:1084px;top:188px" width="17.6" height="15.4" viewBox="0 0 16 14">
<g fill="#606060"><path d="M4.1 2.6 Q5.5 0.1 6.9 2.6 L7.4 8.2 H1.6 Z"/><path d="M9.1 2.6 Q10.5 0.1 11.9 2.6 L14.4 8.2 H8.6 Z"/>
<rect x="6.5" y="4.2" width="3" height="3.4"/></g>
<circle cx="4" cy="10" r="2.45" fill="#f7f7f7" stroke="#606060" stroke-width="1.15"/><circle cx="12" cy="10" r="2.45" fill="#f7f7f7" stroke="#606060" stroke-width="1.15"/></svg>
<div class="t" style="left:1104px;top:186.87px;font-size:12.5px;letter-spacing:0.128px;">Drag variable</div>
<div class="a" style="left:1087px;top:210px;width:110px;height:310px;border:1px solid #a9a9a9;background:#fff"></div>
<svg class="a" style="left:1083px;top:527.5px" width="18.7" height="14.3" viewBox="0 0 17 13">
<path d="M1.6 11.6 V8.3 A6.9 6.9 0 0 1 15.4 8.3 V11.6 Z" fill="none" stroke="#555" stroke-width="1.15"/>
<path d="M3.9 9.8 A5.1 5.1 0 0 1 10.4 4.3" fill="none" stroke="#3a70b5" stroke-width="1.9"/>
<path d="M12.4 6.6 L13.6 6.1 L14 10 H12.3 Z" fill="#c9462c"/>
<path d="M8.5 8.9 L11.6 5.2" stroke="#555" stroke-width="1.1"/><circle cx="8.5" cy="8.9" r="1.5" fill="#555"/></svg>
<div class="t" style="left:1104px;top:526.87px;font-size:12.5px;letter-spacing:0.128px;">Drag variable</div>
<div class="a" style="left:1087px;top:550px;width:110px;height:310px;border:1px solid #a9a9a9;background:#fff"></div></div></body></html>
